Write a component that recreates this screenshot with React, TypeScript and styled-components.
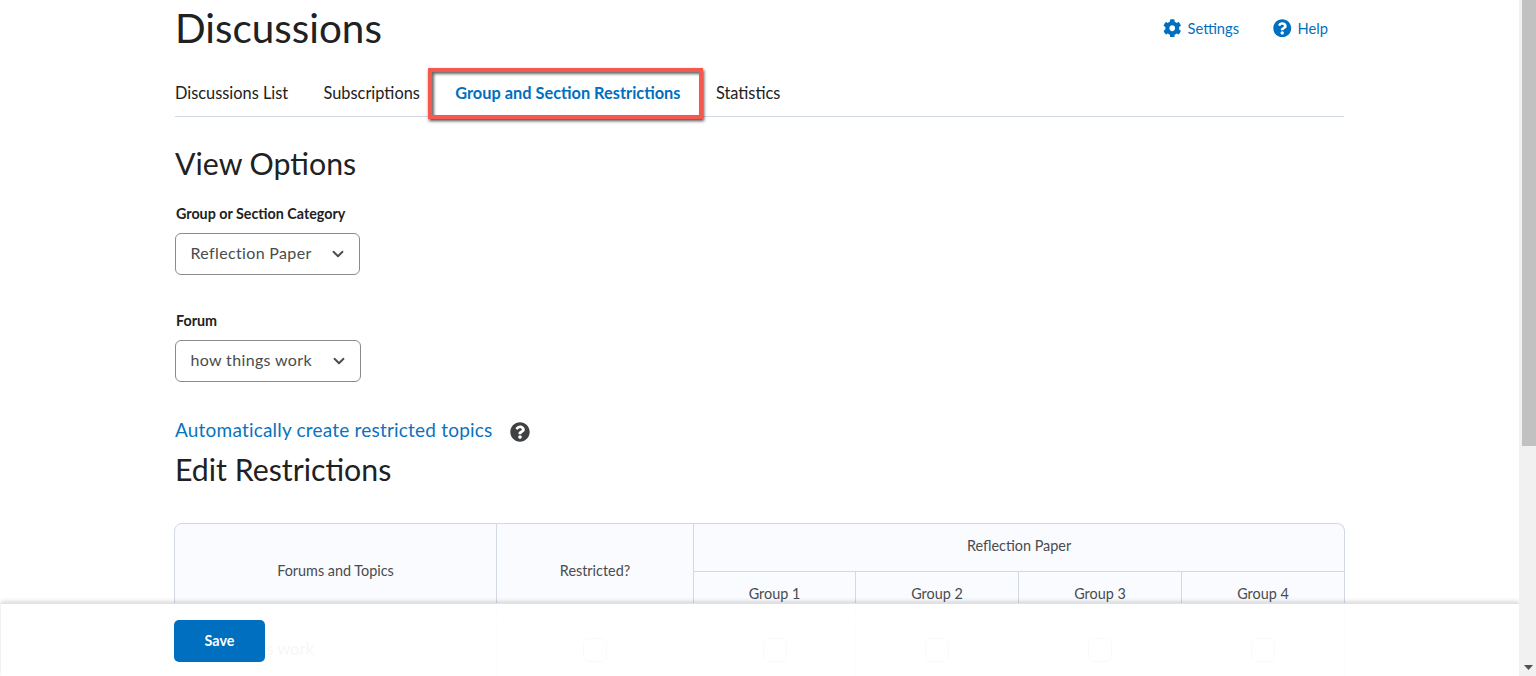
import React from "react";
import styled, { createGlobalStyle } from "styled-components";
import { FaCog, FaQuestionCircle } from "react-icons/fa";

const Global = createGlobalStyle`
  html, body { margin: 0; padding: 0; height: 100%; overflow: hidden; background: #fff; }
  * { box-sizing: border-box; }
  body { font-family: Lato, "Open Sans", "Liberation Sans", sans-serif; color: #202122; }
`;

const Shell = styled.div`
  display: flex;
  width: 1536px;
  height: 676px;
  overflow: hidden;
`;

const Viewport = styled.div`
  position: relative;
  flex: 1;
  min-width: 0;
  overflow: hidden;
`;

const Content = styled.main`
  width: 1170px;
  margin-left: 175px;
  display: flex;
  flex-direction: column;
`;

const HeaderRow = styled.header`
  display: flex;
  align-items: flex-start;
  justify-content: space-between;
  height: 70px;
`;

const PageTitle = styled.h1`
  margin: 4px 0 0;
  font-size: 40.4px;
  line-height: 48px;
  font-weight: 400;
  color: #202122;
`;

const HeaderLinks = styled.nav`
  display: flex;
  gap: 34px;
  margin: 18px 17px 0 0;
`;

const HeaderLink = styled.a`
  display: flex;
  align-items: center;
  gap: 6px;
  height: 20px;
  font-size: 14.7px;
  color: #006fbf;
  svg { width: 18.5px; height: 18.5px; fill: #006fbf; }
`;

const Tabs = styled.nav`
  display: flex;
  height: 47px;
  margin-right: 1px;
  border-bottom: 1px solid #d3d9e3;
  gap: 35.4px;
`;

const Tab = styled.a<{ $active?: boolean }>`
  position: relative;
  font-size: 16.35px;
  line-height: 46px;
  color: ${(p) => (p.$active ? "#006fbf" : "#202122")};
  font-weight: ${(p) => (p.$active ? 700 : 400)};
`;

const Callout = styled.span`
  position: absolute;
  left: -27px;
  right: -22px;
  top: -2px;
  height: 51px;
  border: 4px solid #f6584d;
  box-shadow: 1px 2px 3px rgba(0, 0, 0, 0.7), inset 2px 2px 3px rgba(0, 0, 0, 0.6);
`;

const SectionTitle = styled.h2<{ $top: number }>`
  margin: ${(p) => p.$top}px 0 0;
  font-size: 30.3px;
  line-height: 36px;
  font-weight: 400;
  color: #202122;
`;

const Field = styled.div<{ $top: number }>`
  display: flex;
  flex-direction: column;
  align-items: flex-start;
  margin-top: ${(p) => p.$top}px;
`;

const Label = styled.label`
  font-size: 14.3px;
  line-height: 17px;
  font-weight: 700;
  color: #202122;
  margin-left: 1px;
  margin-bottom: 11px;
`;

const Select = styled.div<{ $width: number }>`
  display: flex;
  align-items: center;
  justify-content: space-between;
  width: ${(p) => p.$width}px;
  height: 42px;
  padding: 0 15px 0 14.5px;
  border: 1px solid #868c8f;
  border-radius: 6px;
  svg { width: 12px; height: 8px; }
`;

const SelectText = styled.span`
  margin-top: -4px;
  font-size: 16px;
  letter-spacing: 0.35px;
  color: #494c4e;
`;

const HelpRow = styled.div`
  display: flex;
  align-items: center;
  margin-top: 37px;
  height: 24px;
  gap: 18px;
`;

const BigLink = styled.a`
  margin-top: -4px;
  font-size: 19px;
  letter-spacing: 0.2px;
  color: #0a72c0;
`;

const HelpIcon = styled(FaQuestionCircle)`
  width: 20px;
  height: 20px;
  fill: #3f4143;
  margin-top: 1px;
`;

const Table = styled.table`
  width: 1171px;
  margin: 36px 0 0 -1px;
  table-layout: fixed;
  border-collapse: separate;
  border-spacing: 0;
  font-size: 14.4px;
  color: #494c4e;
`;

const Th = styled.th`
  background: #f9fbff;
  font-weight: 400;
  height: 48px;
  padding: 0 0 5px;
  text-align: center;
  border-bottom: 1px solid #d3d9e3;
  border-right: 1px solid #d3d9e3;
`;

const SpanTh = styled(Th)<{ $first?: boolean }>`
  padding-bottom: 3px;
  border-top: 1px solid #d3d9e3;
  border-left: ${(p) => (p.$first ? "1px solid #d3d9e3" : "none")};
  border-top-left-radius: ${(p) => (p.$first ? "8px" : "0")};
`;

const CategoryTh = styled(Th)`
  height: 49px;
  padding-bottom: 4px;
  border-top: 1px solid #d3d9e3;
  border-top-right-radius: 8px;
`;

const Td = styled.td<{ $first?: boolean }>`
  height: 62px;
  padding: 0 0 2px;
  text-align: center;
  border-right: 1px solid #d3d9e3;
  border-left: ${(p) => (p.$first ? "1px solid #d3d9e3" : "none")};
  border-bottom: 1px solid #d3d9e3;
  font-size: 16.5px;
  color: #494c4e;
`;

const TopicCell = styled(Td)`
  text-align: left;
  padding: 0 0 4px 19px;
`;

const Check = styled.span`
  display: inline-block;
  width: 24px;
  height: 24px;
  vertical-align: middle;
  border: 1px solid #868c8f;
  border-radius: 6px;
`;

const Footer = styled.footer`
  position: absolute;
  left: 1px;
  right: 0;
  top: 603px;
  height: 73px;
  padding: 16px 0 0 173px;
  background: rgba(255, 255, 255, 0.95);
  border-top: 1px solid #dfe3e8;
  box-shadow: 0 -2px 4px rgba(0, 0, 0, 0.14);
`;

const SaveButton = styled.button`
  display: block;
  width: 91px;
  height: 42px;
  padding: 0 0 2px;
  border: none;
  border-radius: 5px;
  background: #006fbf;
  color: #fff;
  font-family: inherit;
  font-size: 14.3px;
  font-weight: 700;
`;

const Scrollbar = styled.div`
  flex: none;
  width: 17px;
  height: 676px;
  padding-left: 2px;
  background: #f1f1f1;
  display: flex;
  flex-direction: column;
  justify-content: space-between;
  align-items: center;
`;

const ScrollThumb = styled.div`
  width: 14px;
  height: 446px;
  background: #c1c1c1;
`;

const ScrollArrow = styled.svg`
  width: 9px;
  height: 5px;
  margin-bottom: 6px;
  fill: #505050;
`;

const Chevron = () => (
  <svg viewBox="0 0 12 8" fill="none" stroke="#494c4e" strokeWidth="1.9" strokeLinecap="round" strokeLinejoin="round">
    <path d="M1.5 1.8 6 6.2l4.5-4.4" />
  </svg>
);

const groups = ["Group 1", "Group 2", "Group 3", "Group 4"];

export default function App() {
  return (
    <Shell>
      <Global />
      <Viewport>
        <Content>
          <HeaderRow>
            <PageTitle>Discussions</PageTitle>
            <HeaderLinks>
              <HeaderLink><FaCog />Settings</HeaderLink>
              <HeaderLink><FaQuestionCircle />Help</HeaderLink>
            </HeaderLinks>
          </HeaderRow>
          <Tabs>
            <Tab>Discussions List</Tab>
            <Tab>Subscriptions</Tab>
            <Tab $active>Group and Section Restrictions<Callout /></Tab>
            <Tab>Statistics</Tab>
          </Tabs>
          <SectionTitle $top={28}>View Options</SectionTitle>
          <Field $top={24}>
            <Label>Group or Section Category</Label>
            <Select $width={185}><SelectText>Reflection Paper</SelectText><Chevron /></Select>
          </Field>
          <Field $top={37}>
            <Label>Forum</Label>
            <Select $width={186}><SelectText>how things work</SelectText><Chevron /></Select>
          </Field>
          <HelpRow>
            <BigLink>Automatically create restricted topics</BigLink>
            <HelpIcon />
          </HelpRow>
          <SectionTitle $top={8}>Edit Restrictions</SectionTitle>
          <Table>
            <colgroup>
              <col style={{ width: 323 }} />
              <col style={{ width: 197 }} />
              <col style={{ width: 162 }} />
              <col style={{ width: 163 }} />
              <col style={{ width: 163 }} />
              <col style={{ width: 163 }} />
            </colgroup>
            <thead>
              <tr>
                <SpanTh $first rowSpan={2}>Forums and Topics</SpanTh>
                <SpanTh rowSpan={2}>Restricted?</SpanTh>
                <CategoryTh colSpan={4}>Reflection Paper</CategoryTh>
              </tr>
              <tr>
                {groups.map((g) => <Th key={g}>{g}</Th>)}
              </tr>
            </thead>
            <tbody>
              <tr>
                <TopicCell $first>how things work</TopicCell>
                <Td><Check /></Td>
                {groups.map((g) => <Td key={g}><Check /></Td>)}
              </tr>
            </tbody>
          </Table>
        </Content>
        <Footer>
          <SaveButton>Save</SaveButton>
        </Footer>
      </Viewport>
      <Scrollbar>
        <ScrollThumb />
        <ScrollArrow viewBox="0 0 9 5"><path d="M0 0h9L4.5 5z" /></ScrollArrow>
      </Scrollbar>
    </Shell>
  );
}
